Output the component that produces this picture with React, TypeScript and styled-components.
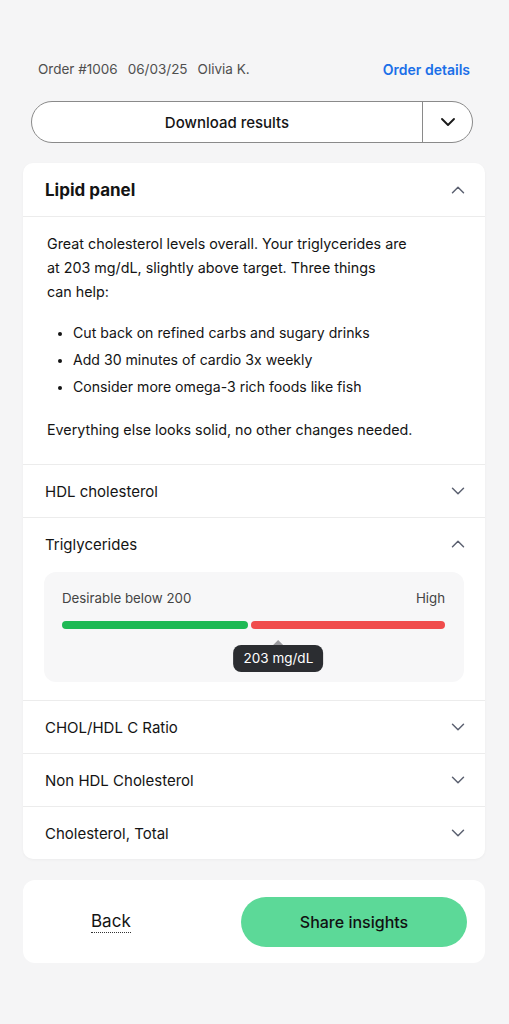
import React from 'react'
import styled, { createGlobalStyle } from 'styled-components'
import { ChevronDown, ChevronUp } from 'lucide-react'

const GlobalStyle = createGlobalStyle`
  * { box-sizing: border-box; }
  body {
    margin: 0;
    background: #f5f5f6;
    font-family: Inter, "Noto Sans", "Liberation Sans", sans-serif;
    color: #141414;
    -webkit-font-smoothing: antialiased;
  }
`

const Page = styled.div`
  width: 509px;
  min-height: 1024px;
  padding: 59px 24px 40px 23px;
  display: flex;
  flex-direction: column;
`

const OrderBar = styled.div`
  display: flex;
  justify-content: space-between;
  align-items: center;
  height: 20px;
  padding: 0 15px 0 15px;
  font-size: 13.5px;
`

const Meta = styled.div`
  display: flex;
  gap: 10px;
  color: #4f4f4f;
`

const Link = styled.a`
  color: #1a6fe8;
  font-weight: 600;
  font-size: 14px;
  text-decoration: none;
`

const SplitButton = styled.div`
  margin: 22px 12px 0 8px;
  height: 42px;
  display: flex;
  border: 1px solid #8a8a8a;
  border-radius: 21px;
  background: #fff;
  overflow: hidden;
`

const MainAction = styled.button`
  flex: 1;
  border: none;
  background: none;
  font: inherit;
  font-size: 15px;
  font-weight: 500;
  color: #141414;
`

const MenuAction = styled.button`
  width: 50px;
  border: none;
  border-left: 1px solid #8a8a8a;
  background: none;
  display: flex;
  align-items: center;
  justify-content: center;
  color: #1a1a1a;
  padding: 0;
`

const Card = styled.section`
  margin-top: 20px;
  background: #fff;
  border-radius: 10px;
  box-shadow: 0 1px 3px rgba(0, 0, 0, 0.04);
`

const Row = styled.div<{ $title?: boolean }>`
  height: ${p => (p.$title ? '53px' : '52px')};
  display: flex;
  align-items: center;
  justify-content: space-between;
  padding: 0 16px 0 22px;
  font-size: ${p => (p.$title ? '17px' : '15px')};
  font-weight: ${p => (p.$title ? 700 : 400)};
  color: #141414;
  svg { color: #5b6070; }
`

const Section = styled.div`
  border-top: 1px solid #ececec;
`

const Summary = styled.div`
  border-top: 1px solid #ececec;
  padding: 15px 22px 22px 24px;
  font-size: 14.3px;
  line-height: 24px;
`

const Para = styled.p`
  margin: 0;
`

const Tips = styled.ul`
  margin: 15px 0 18px 0;
  padding: 0 0 0 26px;
  line-height: 27px;
  font-size: 14.1px;
  li::marker { font-size: 12px; }
`

const RangeBox = styled.div`
  margin: 2px 21px 18px 21px;
  background: #f7f7f8;
  border-radius: 12px;
  padding: 18px 19px 9px 18px;
`

const RangeLabels = styled.div`
  display: flex;
  justify-content: space-between;
  font-size: 13.3px;
  line-height: 16px;
  color: #444;
`

const Bars = styled.div`
  margin-top: 15px;
  display: flex;
  gap: 3px;
`

const Bar = styled.div<{ $color: string; $grow: number }>`
  flex: ${p => p.$grow};
  height: 8px;
  border-radius: 4px;
  background: ${p => p.$color};
`

const MarkerTrack = styled.div`
  position: relative;
  height: 44px;
`

const Tip = styled.div`
  position: absolute;
  top: 16px;
  transform: translateX(-50%);
  background: #2b2d31;
  color: #fff;
  font-size: 13.5px;
  height: 27px;
  line-height: 27px;
  padding: 0 10px;
  border-radius: 8px;
  white-space: nowrap;
  &::before {
    content: '';
    position: absolute;
    left: 50%;
    top: -5px;
    margin-left: -5px;
    border: 5px solid transparent;
    border-top: none;
    border-bottom-color: #9a9a9e;
  }
`

const Footer = styled.div`
  margin-top: 21px;
  height: 83px;
  background: #fff;
  border-radius: 12px;
  display: flex;
  align-items: center;
  justify-content: space-between;
  padding: 0 18px 0 68px;
`

const BackLink = styled.button`
  border: none;
  background: none;
  padding: 0 0 1px 0;
  font: inherit;
  font-size: 17px;
  color: #141414;
  border-bottom: 1px dotted #333;
`

const ShareButton = styled.button`
  width: 226px;
  height: 50px;
  border: none;
  border-radius: 25px;
  background: #5cd998;
  font: inherit;
  font-size: 16px;
  font-weight: 500;
  color: #111;
`

const rows = ['CHOL/HDL C Ratio', 'Non HDL Cholesterol', 'Cholesterol, Total']

const value = 203
const markerPct = 56.5

export default function App() {
  return (
    <>
      <GlobalStyle />
      <Page>
        <OrderBar>
          <Meta>
            <span>Order #1006</span>
            <span>06/03/25</span>
            <span>Olivia K.</span>
          </Meta>
          <Link>Order details</Link>
        </OrderBar>

        <SplitButton>
          <MainAction>Download results</MainAction>
          <MenuAction><ChevronDown size={24} strokeWidth={1.9} /></MenuAction>
        </SplitButton>

        <Card>
          <Row $title>
            <span>Lipid panel</span>
            <ChevronUp size={22} strokeWidth={1.6} />
          </Row>
          <Summary>
            <Para>
              Great cholesterol levels overall. Your triglycerides are<br />
              at 203 mg/dL, slightly above target. Three things<br />
              can help:
            </Para>
            <Tips>
              <li>Cut back on refined carbs and sugary drinks</li>
              <li>Add 30 minutes of cardio 3x weekly</li>
              <li>Consider more omega-3 rich foods like fish</li>
            </Tips>
            <Para>Everything else looks solid, no other changes needed.</Para>
          </Summary>
          <Section>
            <Row>
              <span>HDL cholesterol</span>
              <ChevronDown size={22} strokeWidth={1.6} />
            </Row>
          </Section>
          <Section>
            <Row>
              <span>Triglycerides</span>
              <ChevronUp size={22} strokeWidth={1.6} />
            </Row>
            <RangeBox>
              <RangeLabels>
                <span>Desirable below 200</span>
                <span>High</span>
              </RangeLabels>
              <Bars>
                <Bar $color="#1db954" $grow={186} />
                <Bar $color="#f04c4c" $grow={194} />
              </Bars>
              <MarkerTrack>
                <Tip style={{ left: `${markerPct}%` }}>{value} mg/dL</Tip>
              </MarkerTrack>
            </RangeBox>
          </Section>
          {rows.map(r => (
            <Section key={r}>
              <Row>
                <span>{r}</span>
                <ChevronDown size={22} strokeWidth={1.6} />
              </Row>
            </Section>
          ))}
        </Card>

        <Footer>
          <BackLink>Back</BackLink>
          <ShareButton>Share insights</ShareButton>
        </Footer>
      </Page>
    </>
  )
}
